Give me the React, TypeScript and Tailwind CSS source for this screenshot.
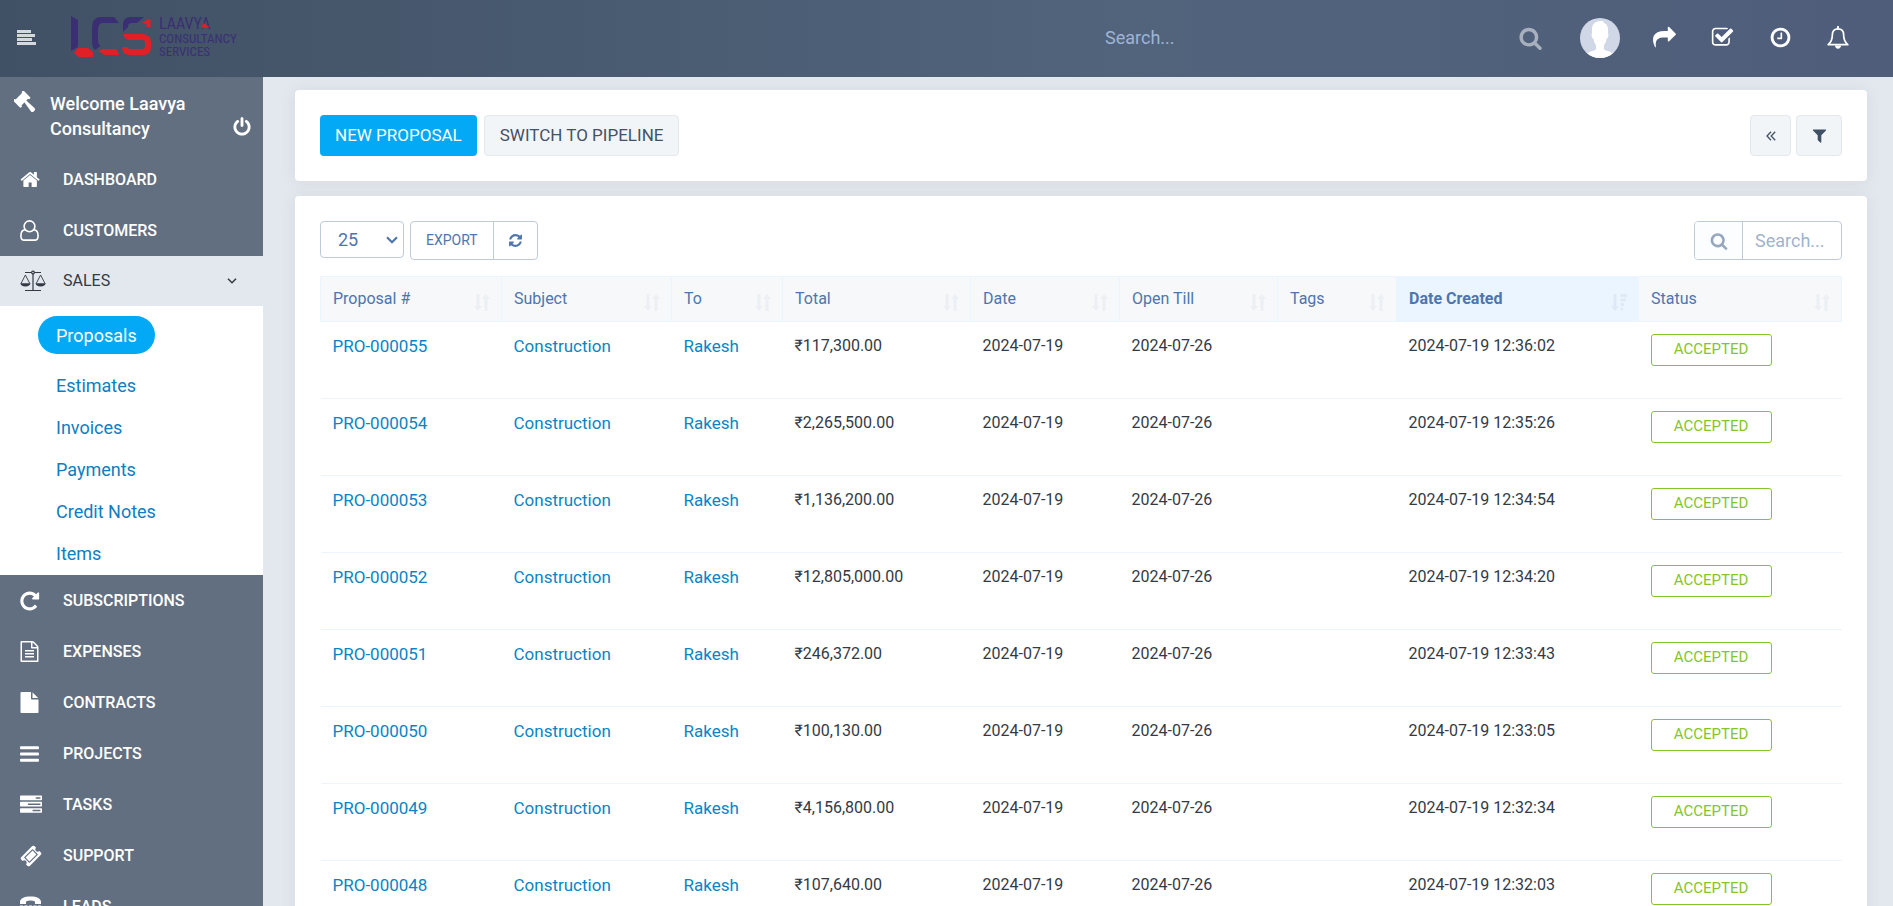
import { useState, type ReactNode } from "react";

type IconProps = { className?: string };

const Glyph = ({ d, className, box = "0 0 1792 1792" }: IconProps & { d: string; box?: string }) => (
  <svg viewBox={box} className={className} fill="currentColor" aria-hidden="true">
    <path d={d} />
  </svg>
);

const paths = {
  home: "M1472 992v480q0 26-19 45t-45 19h-384v-384h-256v384h-384q-26 0-45-19t-19-45v-480q0-1 .5-3t.5-3l575-474 575 474q1 2 1 6zm223-69l-62 74q-8 9-21 11h-3q-13 0-21-7l-692-577-692 577q-12 8-24 7-13-2-21-11l-62-74q-8-10-7-23.5t11-21.5l719-599q32-26 76-26t76 26l244 204v-195q0-14 9-23t23-9h192q14 0 23 9t9 23v408l219 182q10 8 11 21.5t-7 23.5z",
  repeat: "M1664 256v448q0 26-19 45t-45 19h-448q-42 0-59-40-17-39 14-69l138-138q-148-137-349-137-104 0-198.5 40.5t-163.5 109.5-109.5 163.5-40.5 198.5 40.5 198.5 109.5 163.5 163.5 109.5 198.5 40.5q119 0 225-52t179-147q7-10 23-12 15 0 25 9l137 138q9 8 9.5 20.5t-7.5 22.5q-109 132-264 204.5t-327 72.5q-156 0-298-61t-245-164-164-245-61-298 61-298 164-245 245-164 298-61q147 0 284.5 55.5t244.5 156.5l130-129q29-31 70-14 39 17 39 59z",
  fileText: "M1596 380q28 28 48 76t20 88v1152q0 40-28 68t-68 28h-1344q-40 0-68-28t-28-68v-1600q0-40 28-68t68-28h896q40 0 88 20t76 48zm-444-244v376h376q-10-29-22-41l-313-313q-12-12-41-22zm384 1528v-1024h-416q-40 0-68-28t-28-68v-416h-768v1536h1280zm-1024-864q0-14 9-23t23-9h704q14 0 23 9t9 23v64q0 14-9 23t-23 9h-704q-14 0-23-9t-9-23v-64zm736 224q14 0 23 9t9 23v64q0 14-9 23t-23 9h-704q-14 0-23-9t-9-23v-64q0-14 9-23t23-9h704zm0 256q14 0 23 9t9 23v64q0 14-9 23t-23 9h-704q-14 0-23-9t-9-23v-64q0-14 9-23t23-9h704z",
  file: "M1152 512v-472q22 14 36 28l408 408q14 14 28 36h-472zm-128 32q0 40 28 68t68 28h544v1056q0 40-28 68t-68 28h-1344q-40 0-68-28t-28-68v-1600q0-40 28-68t68-28h800v544z",
  bars: "M1664 1344v128q0 26-19 45t-45 19h-1408q-26 0-45-19t-19-45v-128q0-26 19-45t45-19h1408q26 0 45 19t19 45zm0-512v128q0 26-19 45t-45 19h-1408q-26 0-45-19t-19-45v-128q0-26 19-45t45-19h1408q26 0 45 19t19 45zm0-512v128q0 26-19 45t-45 19h-1408q-26 0-45-19t-19-45v-128q0-26 19-45t45-19h1408q26 0 45 19t19 45z",
  tasks: "M1024 1408h640v-128h-640v128zm-384-512h1024v-128h-1024v128zm640-512h384v-128h-384v128zm512 832v256q0 26-19 45t-45 19h-1664q-26 0-45-19t-19-45v-256q0-26 19-45t45-19h1664q26 0 45 19t19 45zm0-512v256q0 26-19 45t-45 19h-1664q-26 0-45-19t-19-45v-256q0-26 19-45t45-19h1664q26 0 45 19t19 45zm0-512v256q0 26-19 45t-45 19h-1664q-26 0-45-19t-19-45v-256q0-26 19-45t45-19h1664q26 0 45 19t19 45z",
  ticket: "M1024 452l316 316-572 572-316-316zm-211 979l618-618q19-19 19-45t-19-45l-362-362q-18-18-45-18t-45 18l-618 618q-19 19-19 45t19 45l362 362q18 18 45 18t45-18zm889-637l-907 908q-37 37-90.5 37t-90.5-37l-126-126q56-56 56-136t-56-136-136-56-136 56l-125-126q-37-37-37-90.5t37-90.5l907-906q37-37 90.5-37t90.5 37l125 125q-56 56-56 136t56 136 136 56 136-56l126 125q37 37 37 90.5t-37 90.5z",
  search: "M1216 832q0-185-131.5-316.5t-316.5-131.5-316.5 131.5-131.5 316.5 131.5 316.5 316.5 131.5 316.5-131.5 131.5-316.5zm512 832q0 52-38 90t-90 38q-54 0-90-38l-343-342q-179 124-399 124-143 0-273.5-55.5t-225-150-150-225-55.5-273.5 55.5-273.5 150-225 225-150 273.5-55.5 273.5 55.5 225 150 150 225 55.5 273.5q0 220-124 399l343 343q37 37 37 90z",
  share: "M1792 640q0 26-19 45l-512 512q-19 19-45 19t-45-19-19-45v-256h-224q-98 0-175.5 6t-154 21.5-133 42.5-105.5 69.5-80 101-48.5 138.5-17.5 181q0 55 5 123 0 6 2.5 23.5t2.5 26.5q0 15-8.5 25t-23.5 10q-16 0-28-17-7-9-13-22t-13.5-30-10.5-24q-127-285-127-451 0-199 53-333 162-403 875-403h224v-256q0-26 19-45t45-19 45 19l512 512q19 19 19 45z",
  check: "M1472 930v318q0 119-84.5 203.5t-203.5 84.5h-832q-119 0-203.5-84.5t-84.5-203.5v-832q0-119 84.5-203.5t203.5-84.5h832q63 0 117 25 15 7 18 23 3 17-9 29l-49 49q-10 10-23 10-3 0-9-2-23-6-45-6h-832q-66 0-113 47t-47 113v832q0 66 47 113t113 47h832q66 0 113-47t47-113v-254q0-13 9-22l64-64q10-10 23-10 6 0 12 3 20 8 20 29zm231-489l-814 814q-24 24-57 24t-57-24l-430-430q-24-24-24-57t24-57l110-110q24-24 57-24t57 24l263 263 647-647q24-24 57-24t57 24l110 110q24 24 24 57t-24 57z",
  clock: "M1024 544v448q0 14-9 23t-23 9h-320q-14 0-23-9t-9-23v-64q0-14 9-23t23-9h224v-352q0-14 9-23t23-9h64q14 0 23 9t9 23zm416 352q0-148-73-273t-198-198-273-73-273 73-198 198-73 273 73 273 198 198 273 73 273-73 198-198 73-273zm224 0q0 209-103 385.5t-279.5 279.5-385.5 103-385.5-103-279.5-279.5-103-385.5 103-385.5 279.5-279.5 385.5-103 385.5 103 279.5 279.5 103 385.5z",
  filter: "M1595 295q17 41-14 70l-493 493v742q0 42-39 59-13 5-25 5-27 0-45-19l-256-256q-19-19-19-45v-486l-493-493q-31-29-14-70 17-39 59-39h1280q42 0 59 39z",
  refresh: "M1639 1056q0 5-1 7-64 268-268 434.5t-478 166.5q-146 0-282.5-55t-243.5-157l-129 129q-19 19-45 19t-45-19-19-45v-448q0-26 19-45t45-19h448q26 0 45 19t19 45-19 45l-137 137q71 66 161 102t187 36q134 0 250-65t186-179q11-17 53-117 8-23 30-23h192q13 0 22.5 9.5t9.5 22.5zm25-800v448q0 26-19 45t-45 19h-448q-26 0-45-19t-19-45 19-45l138-138q-148-137-349-137-134 0-250 65t-186 179q-11 17-53 117-8 23-30 23h-199q-13 0-22.5-9.5t-9.5-22.5v-7q65-268 270-434.5t480-166.5q146 0 284 55.5t245 156.5l130-129q19-19 45-19t45 19 19 45z",
  power: "M1664 896q0 156-61 298t-164 245-245 164-298 61-298-61-245-164-164-245-61-298q0-182 80.5-343t226.5-270q43-32 95.5-25t83.5 50q32 42 24.5 94.5t-49.5 84.5q-98 74-151.5 181t-53.5 228q0 104 40.5 198.5t109.5 163.5 163.5 109.5 198.5 40.5 198.5-40.5 163.5-109.5 109.5-163.5 40.5-198.5q0-121-53.5-228t-151.5-181q-42-32-49.5-84.5t24.5-94.5q31-43 84-50t95 25q146 109 226.5 270t80.5 343zm-640-768v640q0 52-38 90t-90 38-90-38-38-90v-640q0-52 38-90t90-38 90 38 38 90z",
};

// hammer head on the upper left, handle running down to the right
const GavelIcon = () => (
  <svg viewBox="0 0 22 22" className="size-[22px]" fill="currentColor" aria-hidden="true">
    <g transform="rotate(45 8 8)">
      <rect x="3.800" y="2.800" width="8.400" height="11" />
      <rect x="2.600" y="1" width="10.800" height="2.600" rx="1.200" />
      <rect x="2.600" y="12.900" width="10.800" height="2.600" rx="1.200" />
    </g>
    <path d="M10 10.700l1.700-1.700 8.800 8q1.200 1.300 0 2.700l-.8.800q-1.400 1.200-2.700 0z" />
  </svg>
);

const UserIcon = () => (
  <svg viewBox="0 0 19 21" className="h-[21px] w-[19px]" fill="none" stroke="currentColor" strokeWidth="1.600" aria-hidden="true">
    <circle cx="9.500" cy="6.300" r="5.400" />
    <path d="M5.200 9.700C2.200 9.800.9 12.300.9 15.900c0 2.300 1.200 4.200 3.400 4.200h10.400c2.200 0 3.400-1.900 3.400-4.200 0-3.600-1.300-6.100-4.300-6.200" />
  </svg>
);

const ScaleIcon = () => (
  <svg viewBox="0 0 26 22" className="h-[22px] w-[26px]" fill="none" stroke="currentColor" strokeWidth="1.200" aria-hidden="true">
    <path d="M5 2.500h6.500M14.500 2.500H21M13 4v16M5 20.500h16" />
    <circle cx="13" cy="2.500" r="1.400" />
    <path d="M5.400 5L1 13.500M5.400 5l4.400 8.500M20.600 5l-4.400 8.500M20.600 5L25 13.500" strokeWidth=".9" />
    <path d="M.4 13.300h10c0 2-2 3.200-5 3.200s-5-1.200-5-3.200zM15.600 13.300h10c0 2-2 3.200-5 3.200s-5-1.200-5-3.200z" fill="currentColor" stroke="none" />
  </svg>
);

const PhoneIcon = () => (
  <svg viewBox="0 0 21 21" className="size-[21px]" fill="currentColor" aria-hidden="true">
    <path d="M0 6C0 2.500 4 .5 10.500.5S21 2.500 21 6v1.500q0 .5-.5.5h-5q-.5 0-.5-.5V5.600Q13 4.500 10.500 4.500T6 5.600v1.900q0 .5-.5.5h-5Q0 8 0 7.500z" />
    <path d="M0 9.500h3v2.500H0zM4.500 9.500h3v2.500h-3zM9 9.500h3v2.500H9zM13.500 9.500h3v2.500h-3zM18 9.500h3v2.500h-3zM2 13.500h3V16H2zM7 13.500h3V16H7zM11.500 13.500h3V16h-3zM16 13.500h3V16h-3zM2 17.500h17V20H2z" />
  </svg>
);

const BellIcon = () => (
  <svg viewBox="0 0 22 24" className="h-6 w-[22px]" fill="none" stroke="currentColor" strokeWidth="1.700" strokeLinejoin="round" aria-hidden="true">
    <path d="M11 2.800c-3.600 0-5.600 2.400-5.600 5.800 0 4.800-1.200 7.700-4.200 10.100h19.600c-3-2.400-4.200-5.300-4.200-10.100 0-3.400-2-5.800-5.600-5.800z" />
    <path d="M11 .8v2" strokeWidth="2" strokeLinecap="round" />
    <path d="M8 19.500h6c0 1.900-1.200 3.200-3 3.200s-3-1.300-3-3.200z" fill="currentColor" stroke="none" />
  </svg>
);

const SortIcon = ({ descending }: { descending?: boolean }) => (
  <svg viewBox="0 0 16 17" className="h-[17px] w-4 shrink-0" fill="currentColor" aria-hidden="true">
    <path d="M2.500 0h3v12H8l-4 5-4-5h2.500z" />
    {descending ? (
      <path d="M9.500 0H16v3H9.500zM9.500 4.500H15v3H9.500zM9.500 9H13v3H9.500zM9.500 13.500H12v3H9.500z" />
    ) : (
      <path d="M10.500 17h3V5H16l-4-5-4 5h2.500z" />
    )}
  </svg>
);

const Logo = () => (
  <a href="#" aria-label="Laavya Consultancy Services" className="flex h-[44px] items-start gap-2 text-[#3a2f73]">
    <svg viewBox="0 0 80 42" className="h-[42px] w-20" aria-hidden="true">
      <path d="M0 0l7 4v27l-7 4z" fill="#3a2f73" />
      <path d="M7 32h10l5 4v5H8l-5-4z" fill="#df2027" />
      <path d="M28 1h15l5 6H31q-4 1-4 7v11q0 3 2.500 5L24 34q-3-3-3-8V13Q21 2 28 1z" fill="#3a2f73" />
      <path d="M32 33h14l2 6H34l-7-4z" fill="#df2027" />
      <path d="M58 1h15l-7 6h-6q-3 .5-3 4l-5 5V9q0-7 6-8z" fill="#3a2f73" />
      <path d="M71 7l6-4 2.500 1v7h-4V8z" fill="#df2027" />
      <path d="M52 18h20q8 1 8 8v5q0 7-7 8H58q-7-1-7-8h6q0 2 3 2h11q3 0 3-3v-3q0-3-3-3H58q-5-1-6-6z" fill="#df2027" />
    </svg>
    <span className="flex flex-col font-['Roboto_Condensed',sans-serif] text-[13px] leading-[13px]">
      <span className="relative self-start text-[16px] leading-4">
        LAAVYA
        <svg viewBox="0 0 9 5" className="absolute right-0 top-[7px] h-[5px] w-[9px]" aria-hidden="true">
          <path d="M2 0l7 4-9 1z" fill="#df2027" />
        </svg>
      </span>
      <span>CONSULTANCY</span>
      <span>SERVICES</span>
    </span>
  </a>
);

const Avatar = () => (
  <svg viewBox="0 0 40 40" className="size-10 rounded-full" aria-hidden="true">
    <rect width="40" height="40" fill="#d0d7e6" />
    <path d="M20 3c-5 0-8 3.500-8 8.500v4c-1 1 0 5 1.500 5.500.5 3 1.500 5 2.500 6v4c-1 2-6 2-9 4.500V40h26v-4.500c-3-2.500-8-2.500-9-4.500v-4c1-1 2-3 2.500-6 1.500-.5 2.500-4.500 1.500-5.500V12c0-4-1.500-6.500-4-7l-1-2z" fill="#fff" />
  </svg>
);

const Header = () => (
  <header className="flex h-[77px] shrink-0 items-center bg-linear-to-r from-[#415165] via-[#51647c] via-60% to-[#4f5d7a] pb-0.5 text-white">
    <button aria-label="Toggle menu" className="ml-[17px] mr-[35px] text-[#d5d8dd]">
      <svg viewBox="0 0 19 15" className="h-[15px] w-[19px]" fill="currentColor" aria-hidden="true">
        <path d="M0 0h14v3H0zM0 4h18v3H0zM0 8h15v3H0zM0 12h19v3H0z" />
      </svg>
    </button>
    <Logo />
    <form role="search" className="ml-auto flex w-[438px] items-center">
      <input
        aria-label="Search everything"
        placeholder="Search..."
        className="min-w-0 flex-1 bg-transparent text-[18px] outline-none placeholder:text-[#9fb4d6]"
      />
      <button aria-label="Search" className="text-white/50">
        <Glyph d={paths.search} box="64 0 1728 1792" className="size-6" />
      </button>
    </form>
    <a href="#" aria-label="Profile" className="ml-[37px] mr-[15px]">
      <Avatar />
    </a>
    <nav className="mr-[26px] flex">
      {[
        { label: "Share", icon: <Glyph d={paths.share} className="size-[23px]" /> },
        { label: "Todo items", icon: <Glyph d={paths.check} className="size-[23px]" /> },
        { label: "Timers", icon: <Glyph d={paths.clock} className="size-[23px]" /> },
        { label: "Notifications", icon: <BellIcon /> },
      ].map((item) => (
        <button key={item.label} aria-label={item.label} className="flex w-[58px] justify-center">
          {item.icon}
        </button>
      ))}
    </nav>
  </header>
);

const NavItem = ({ label, icon }: { label: string; icon: ReactNode }) => (
  <li>
    <a href="#" className="flex h-[51px] items-center pl-5 text-[16px] font-medium text-white">
      <span className="w-[43px]">{icon}</span>
      {label}
    </a>
  </li>
);

const salesLinks = ["Estimates", "Invoices", "Payments", "Credit Notes", "Items"];

const Sidebar = () => (
  <aside className="w-[263px] shrink-0 overflow-y-auto bg-[#626f80] text-white [scrollbar-width:none]">
    <div className="flex h-[77px] items-start pl-[14px] pr-[11px] pt-[14px]">
      <GavelIcon />
      <p className="ml-[14px] flex-1 text-[18px] leading-[25px] font-medium">Welcome Laavya Consultancy</p>
      <button aria-label="Logout" className="mt-[26px]">
        <Glyph d={paths.power} className="size-5" />
      </button>
    </div>
    <ul>
      <NavItem label="DASHBOARD" icon={<Glyph d={paths.home} box="64 0 1728 1792" className="size-[21px]" />} />
      <NavItem label="CUSTOMERS" icon={<UserIcon />} />
      <li>
        <a href="#" className="flex h-[50px] items-center bg-[#e3e8ee] pl-5 pr-[26px] text-[16px] text-[#333a45]">
          <span className="w-[43px]">
            <ScaleIcon />
          </span>
          <span className="flex-1">SALES</span>
          <svg viewBox="0 0 10 6" className="h-1.5 w-2.5" fill="none" stroke="currentColor" strokeWidth="1.500" aria-hidden="true">
            <path d="M1 .8l4 4 4-4" />
          </svg>
        </a>
        <ul className="bg-white pb-px pl-[38px] pt-2.5 text-[18px] text-[#0f7dbf]">
          <li className="mb-2.5 flex">
            <a href="#" className="flex h-[38px] items-center rounded-full bg-[#03a9f4] px-[18px] text-white">
              Proposals
            </a>
          </li>
          {salesLinks.map((link) => (
            <li key={link}>
              <a href="#" className="flex h-[42px] items-center px-[18px]">
                {link}
              </a>
            </li>
          ))}
        </ul>
      </li>
      <NavItem label="SUBSCRIPTIONS" icon={<Glyph d={paths.repeat} box="128 0 1664 1792" className="h-[22px] w-[21px]" />} />
      <NavItem label="EXPENSES" icon={<Glyph d={paths.fileText} box="128 0 1536 1792" className="h-[21px] w-[19px]" />} />
      <NavItem label="CONTRACTS" icon={<Glyph d={paths.file} box="128 0 1536 1792" className="h-[21px] w-[19px]" />} />
      <NavItem label="PROJECTS" icon={<Glyph d={paths.bars} box="128 0 1536 1792" className="h-[22px] w-[19px]" />} />
      <NavItem label="TASKS" icon={<Glyph d={paths.tasks} className="size-[22px]" />} />
      <NavItem label="SUPPORT" icon={<Glyph d={paths.ticket} className="size-[22px]" />} />
      <NavItem label="LEADS" icon={<PhoneIcon />} />
    </ul>
  </aside>
);

const columns = [
  { label: "Proposal #", width: "w-[181px]" },
  { label: "Subject", width: "w-[170px]" },
  { label: "To", width: "w-[111px]" },
  { label: "Total", width: "w-[188px]" },
  { label: "Date", width: "w-[149px]" },
  { label: "Open Till", width: "w-[158px]" },
  { label: "Tags", width: "w-[119px]" },
  { label: "Date Created", width: "w-[242px]", sorted: true },
  { label: "Status", width: "" },
];

const proposals = [
  { id: "PRO-000055", total: "₹117,300.00", created: "2024-07-19 12:36:02" },
  { id: "PRO-000054", total: "₹2,265,500.00", created: "2024-07-19 12:35:26" },
  { id: "PRO-000053", total: "₹1,136,200.00", created: "2024-07-19 12:34:54" },
  { id: "PRO-000052", total: "₹12,805,000.00", created: "2024-07-19 12:34:20" },
  { id: "PRO-000051", total: "₹246,372.00", created: "2024-07-19 12:33:43" },
  { id: "PRO-000050", total: "₹100,130.00", created: "2024-07-19 12:33:05" },
  { id: "PRO-000049", total: "₹4,156,800.00", created: "2024-07-19 12:32:34" },
  { id: "PRO-000048", total: "₹107,640.00", created: "2024-07-19 12:32:03" },
];

const ProposalsTable = () => (
  <table className="mt-4 w-full table-fixed border-collapse text-left">
    <thead>
      <tr className="h-[45px] bg-[#f6f8fa] text-[16px] text-[#4e75ad]">
        {columns.map((col) => (
          <th
            key={col.label}
            className={`${col.width} border border-[#ebf5ff] pl-3 pr-[11px] ${col.sorted ? "bg-[#ebf5ff] font-bold" : "font-normal"}`}
          >
            <div className="flex items-center justify-between">
              {col.label}
              <span className={`mt-1.5 ${col.sorted ? "text-[#dde9f5]" : "text-[#eceff4]"}`}>
                <SortIcon descending={col.sorted} />
              </span>
            </div>
          </th>
        ))}
      </tr>
    </thead>
    <tbody className="text-[16px] text-[#333a45]">
      {proposals.map((row) => (
        <tr key={row.id} className="h-[77px] border-b border-[#ebf5ff] align-top leading-6 *:px-3 *:pt-3">
          <td className="text-[17px] text-[#0a84c6]">
            <a href="#">{row.id}</a>
          </td>
          <td className="text-[17px] text-[#0a84c6]">
            <a href="#">Construction</a>
          </td>
          <td className="text-[17px] text-[#0a84c6]">
            <a href="#">Rakesh</a>
          </td>
          <td>{row.total}</td>
          <td>2024-07-19</td>
          <td>2024-07-26</td>
          <td></td>
          <td>{row.created}</td>
          <td>
            <span className="flex h-8 w-[121px] justify-center rounded-[3px] border border-[#84c529] text-[15px] leading-[29px] text-[#84c529]">
              ACCEPTED
            </span>
          </td>
        </tr>
      ))}
    </tbody>
  </table>
);

export default function App() {
  const [pageSize, setPageSize] = useState("25");
  const [query, setQuery] = useState("");

  return (
    <div className="flex h-screen flex-col overflow-hidden bg-[#e3e8ee] font-[Roboto,sans-serif]">
      <Header />
      <div className="flex min-h-0 flex-1">
        <Sidebar />
        <main className="min-w-0 flex-1 overflow-y-auto pl-8 pr-[26px] pt-[13px] [scrollbar-width:none]">
          <section className="flex rounded bg-white p-[25px] text-[17px] shadow-[0_1px_15px_1px_rgba(90,90,90,0.08)]">
            <button className="h-[41px] rounded bg-[#03a9f4] px-[15px] text-white">NEW PROPOSAL</button>
            <button className="ml-[7px] h-[41px] rounded border border-[#e4e8ee] bg-[#f1f5f7] px-[15px] text-[#415165]">
              SWITCH TO PIPELINE
            </button>
            <div className="ml-auto flex gap-[5px] text-[#415165]">
              <button
                aria-label="Toggle small table"
                className="flex h-[41px] w-[41px] items-center justify-center rounded border border-[#e4e8ee] bg-[#f1f5f7]"
              >
                <svg viewBox="0 0 10 10" className="size-2.5" fill="none" stroke="currentColor" strokeWidth="1.300" aria-hidden="true">
                  <path d="M5 .8L1 5l4 4.200M9.200.8l-4 4.200 4 4.200" />
                </svg>
              </button>
              <button
                aria-label="Filter"
                className="flex h-[41px] w-[46px] items-center justify-center rounded border border-[#e4e8ee] bg-[#f1f5f7]"
              >
                <Glyph d={paths.filter} className="size-[17px]" />
              </button>
            </div>
          </section>

          <section className="mt-[15px] rounded bg-white p-[25px] shadow-[0_1px_15px_1px_rgba(90,90,90,0.08)]">
            <div className="flex items-start text-[#4e75ad]">
              <div className="relative mr-1.5">
                <select
                  aria-label="Rows per page"
                  value={pageSize}
                  onChange={(e) => setPageSize(e.target.value)}
                  className="h-[37px] w-[84px] appearance-none rounded border border-[#bfcbd9] bg-white pl-[17px] text-[18px]"
                >
                  <option>10</option>
                  <option>25</option>
                  <option>50</option>
                  <option>100</option>
                </select>
                <svg
                  viewBox="0 0 12 8"
                  className="pointer-events-none absolute right-1.5 top-[15px] h-2 w-3"
                  fill="none"
                  stroke="currentColor"
                  strokeWidth="2.200"
                  aria-hidden="true"
                >
                  <path d="M1 1.200l5 5 5-5" />
                </svg>
              </div>
              <div className="flex h-[39px] rounded border border-[#bfcbd9]">
                <button className="border-r border-[#bfcbd9] px-[15px] text-[14px]">EXPORT</button>
                <button aria-label="Reload" className="flex w-[43px] items-center justify-center">
                  <Glyph d={paths.refresh} className="size-[15px]" />
                </button>
              </div>
              <label className="ml-auto flex h-[39px] w-[148px] overflow-hidden rounded border border-[#bfcbd9]">
                <span className="flex w-12 shrink-0 items-center justify-center border-r border-[#bfcbd9] bg-[#fbfdff] text-[#97a8be]">
                  <Glyph d={paths.search} className="size-[18px]" />
                </span>
                <input
                  type="text"
                  aria-label="Search proposals"
                  value={query}
                  onChange={(e) => setQuery(e.target.value)}
                  placeholder="Search..."
                  className="min-w-0 flex-1 pl-3 text-[18px] outline-none placeholder:text-[#a1b4cc]"
                />
              </label>
            </div>
            <ProposalsTable />
          </section>
        </main>
      </div>
    </div>
  );
}
